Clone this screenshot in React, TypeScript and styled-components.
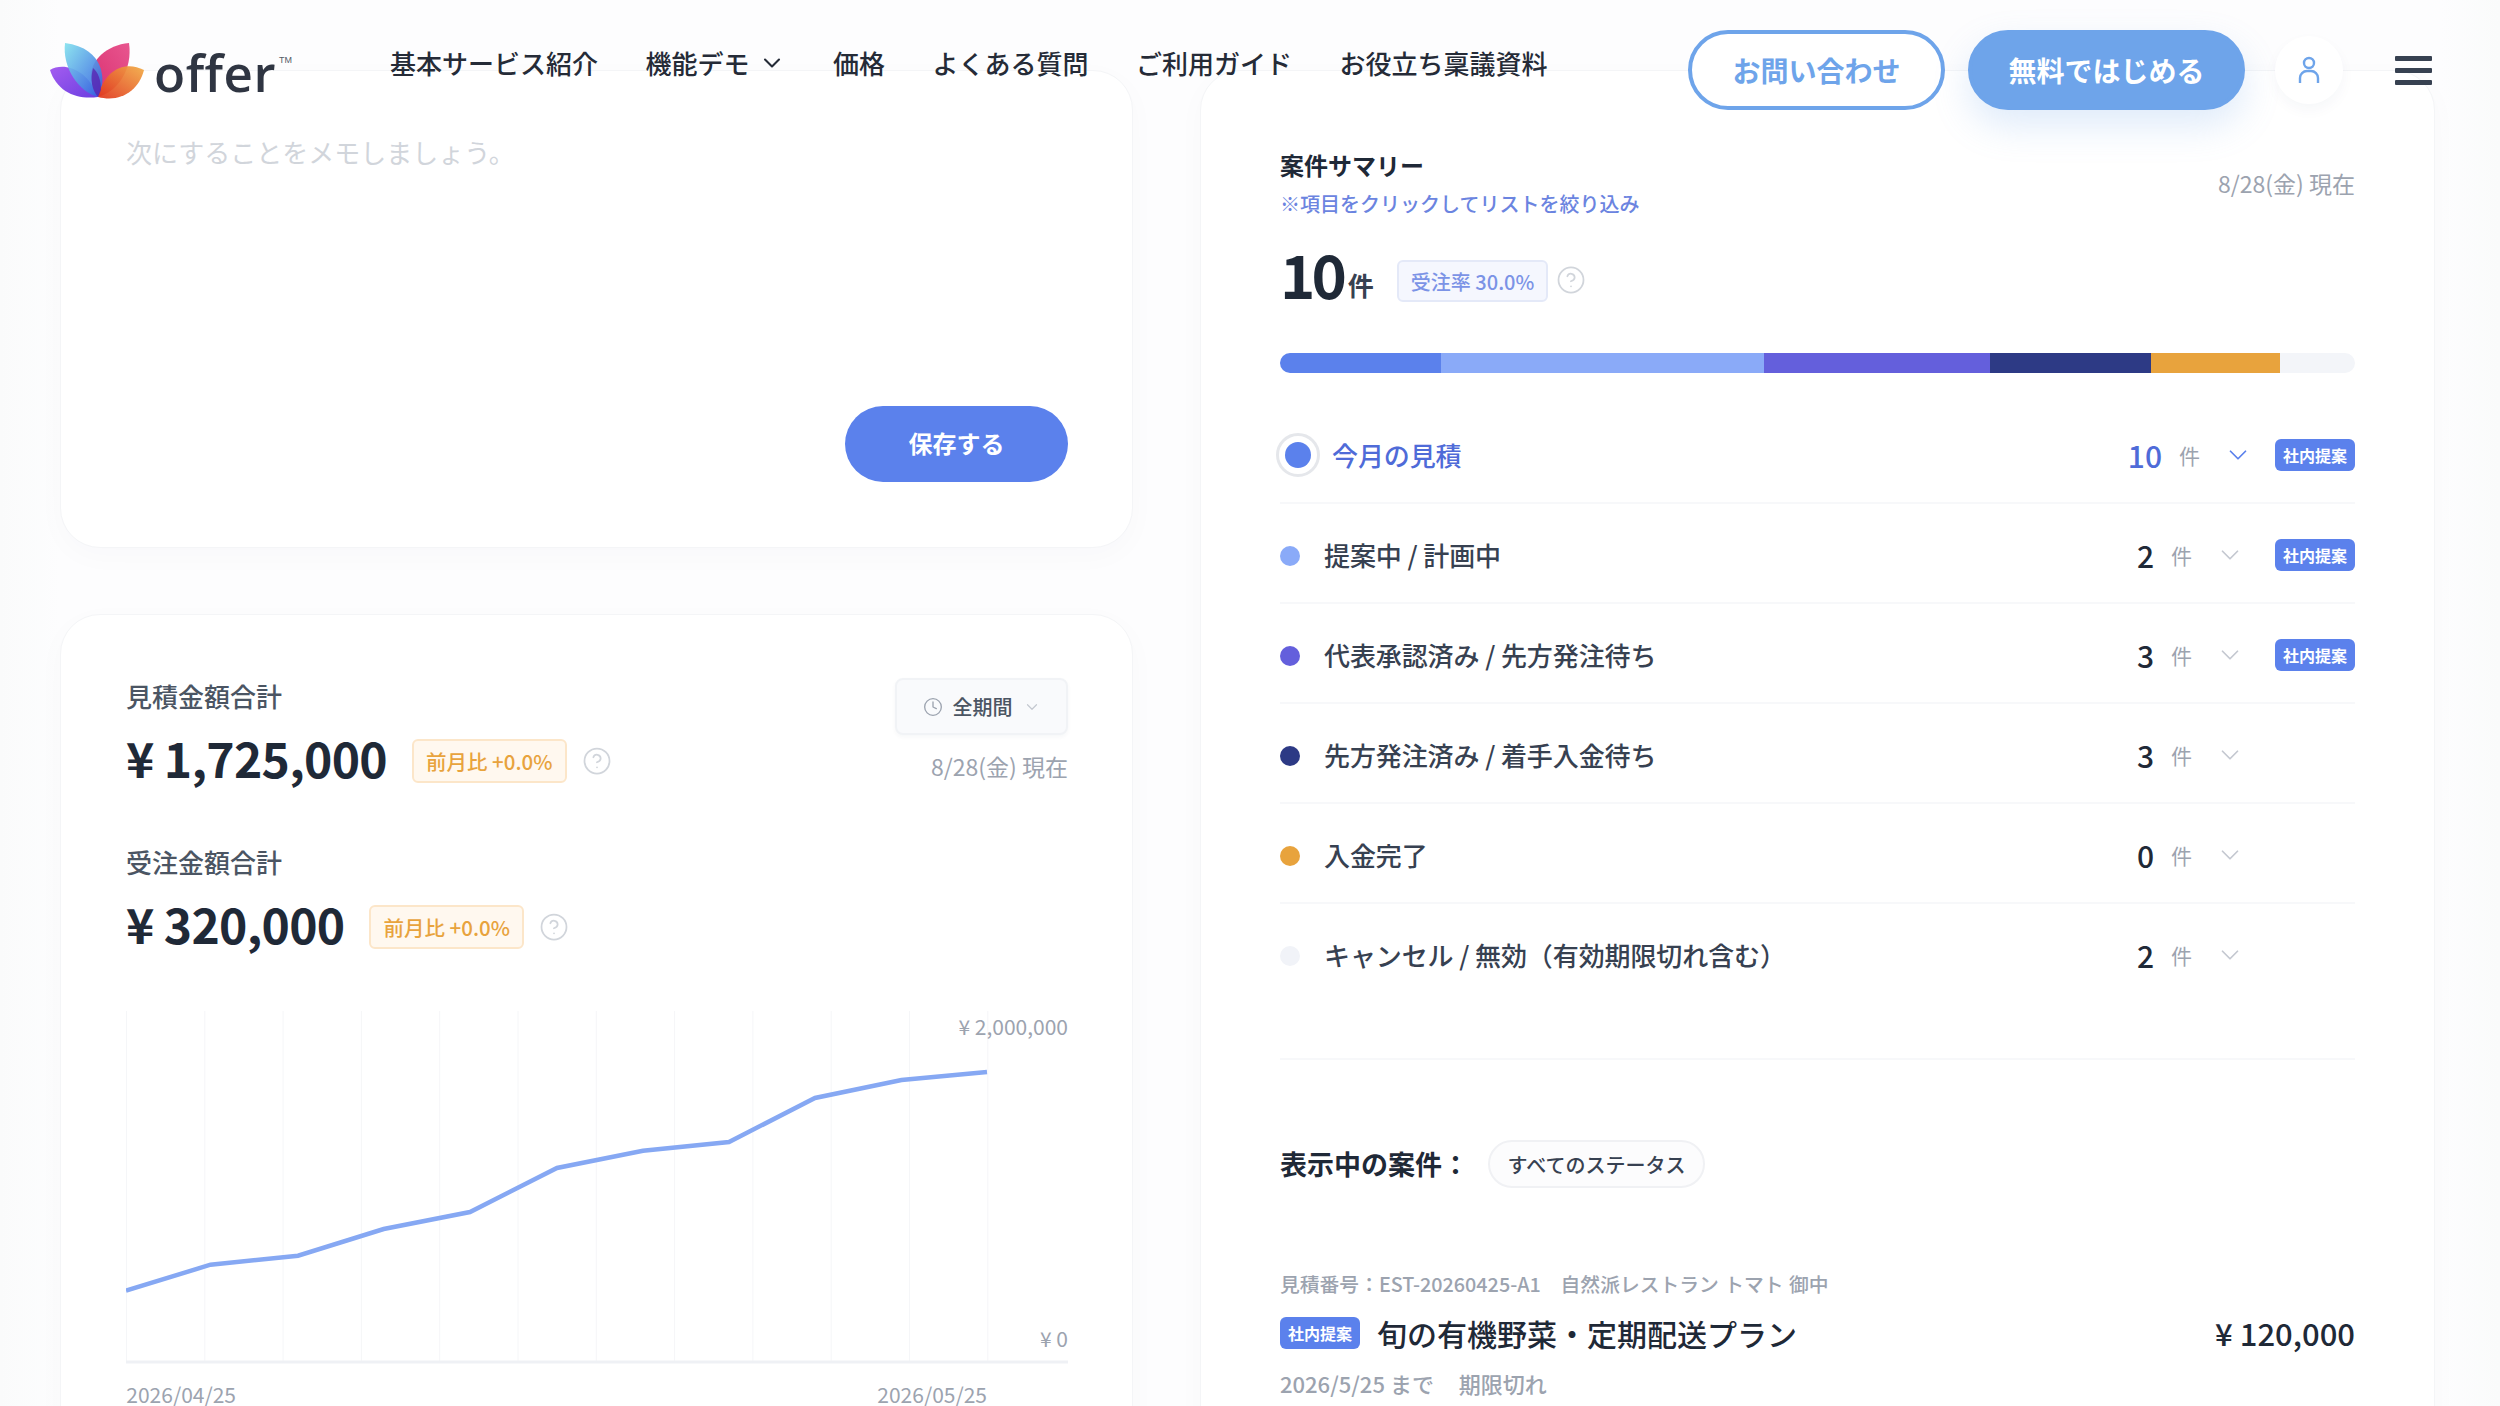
import React from "react";
import styled, { createGlobalStyle } from "styled-components";
import { ChevronDown, CircleHelp, Clock } from "lucide-react";

const GlobalStyle = createGlobalStyle`
  html, body {
    margin: 0;
    padding: 0;
    background: #fff;
  }
  body {
    font-family: "Noto Sans CJK JP", "Noto Sans", sans-serif;
    color: #1f2937;
  }
  * { box-sizing: border-box; }
`;

const Page = styled.div`
  position: relative;
  width: 2500px;
  height: 1406px;
  overflow: hidden;
  background: linear-gradient(90deg, #fafbfb 0, #fdfdfe 60px, #fdfdfe 2440px, #fafbfb 100%);
`;

// Header floats over the cards
const Header = styled.header`
  position: absolute;
  top: 0;
  left: 0;
  right: 0;
  height: 140px;
  display: flex;
  align-items: flex-start;
  padding: 30px 68px 0 48px;
  z-index: 10;
`;

const LogoWrap = styled.a`
  position: relative;
  display: flex;
  align-items: flex-start;
  width: 342px;
  height: 70px;
  padding-top: 10px;
  flex: none;
`;

const LogoText = styled.span`
  margin: 0 0 0 6px;
  font-family: "Open Sans", sans-serif;
  font-size: 51px;
  line-height: 64px;
  font-weight: 600;
  letter-spacing: 0.5px;
  color: #2f3542;
`;

const Tm = styled.span`
  position: absolute;
  left: 231px;
  top: 25px;
  font-family: "Liberation Sans", sans-serif;
  font-size: 9px;
  line-height: 10px;
  color: #555b66;
`;

const Nav = styled.nav`
  display: flex;
  gap: 47.5px;
  height: 66px;
  align-items: center;
`;

const NavItem = styled.a`
  display: flex;
  align-items: center;
  gap: 8px;
  font-size: 26px;
  line-height: 66px;
  font-weight: 500;
  color: #252b37;
  white-space: nowrap;
`;

const Actions = styled.div`
  margin-left: auto;
  display: flex;
  align-items: center;
`;

const PillButton = styled.button<{ $filled?: boolean }>`
  height: 80px;
  padding: 0;
  width: ${(p) => (p.$filled ? "277px" : "257px")};
  margin-left: ${(p) => (p.$filled ? "23px" : "0")};
  border-radius: 40px;
  border: 4px solid #6ea4ea;
  background: ${(p) => (p.$filled ? "#6ea4ea" : "#fff")};
  color: ${(p) => (p.$filled ? "#fff" : "#6ea4ea")};
  font-family: inherit;
  font-size: 28px;
  font-weight: 700;
  box-shadow: ${(p) => (p.$filled ? "0 16px 36px rgba(110, 164, 234, 0.22)" : "none")};
`;

const UserButton = styled.div`
  width: 68px;
  height: 68px;
  margin-left: 30px;
  border-radius: 50%;
  background: #fff;
  box-shadow: 0 6px 14px rgba(30, 50, 90, 0.04);
  display: flex;
  align-items: center;
  justify-content: center;
`;

const Burger = styled.div`
  width: 37px;
  margin-left: 52px;
  display: flex;
  flex-direction: column;
  gap: 7px;

  span {
    display: block;
    height: 5px;
    border-radius: 1px;
    background: #374151;
  }
`;

const Columns = styled.main`
  display: grid;
  grid-template-columns: 1073px 1235px;
  column-gap: 67px;
  padding: 70px 0 0 60px;
  align-items: start;
`;

const LeftColumn = styled.div`
  display: flex;
  flex-direction: column;
  gap: 66px;
`;

const Card = styled.section`
  background: #fff;
  border: 1px solid #f4f5f7;
  border-radius: 40px;
  box-shadow: 0 8px 30px rgba(30, 40, 70, 0.025);
`;

const MemoCard = styled(Card)`
  height: 478px;
  padding: 62px 64px 65px 65px;
  display: flex;
  flex-direction: column;
`;

const MemoHint = styled.div`
  font-size: 26px;
  line-height: 38px;
  color: #d1d5db;
  flex: 1;
`;

const SaveButton = styled.button`
  align-self: flex-end;
  width: 223px;
  height: 76px;
  padding: 0 0 3px;
  border: none;
  border-radius: 38px;
  background: #5b81ec;
  color: #fff;
  font-family: inherit;
  font-size: 24px;
  font-weight: 700;
`;

const TotalsCard = styled(Card)`
  padding: 62px 64px 0 65px;
  height: 900px;
`;

const TotalsTop = styled.div`
  display: flex;
  justify-content: space-between;
  align-items: flex-start;
  height: 166px;
`;

const TotalLabel = styled.div`
  font-size: 26px;
  line-height: 38px;
  font-weight: 500;
  color: #4b5563;
`;

const TotalRow = styled.div`
  display: flex;
  align-items: center;
  height: 72px;
  margin-top: 6px;
`;

const Amount = styled.div`
  font-size: 48px;
  line-height: 72px;
  font-weight: 700;
  letter-spacing: -0.7px;
  color: #1f2937;
  white-space: nowrap;
`;

const DeltaBadge = styled.span`
  margin: 7px 0 0 25px;
  height: 44px;
  padding: 0 12px;
  display: flex;
  align-items: center;
  border: 2px solid #fce6c9;
  border-radius: 6px;
  background: #fff8ef;
  color: #e8a33d;
  font-size: 20.5px;
  font-weight: 500;
  white-space: nowrap;
`;

const HelpIcon = styled(CircleHelp)<{ $gap: number; $drop?: number }>`
  margin: ${(p) => p.$drop ?? 0}px 0 0 ${(p) => p.$gap}px;
  color: #d1d5db;
  flex: none;
`;

const PeriodColumn = styled.div`
  display: flex;
  flex-direction: column;
  align-items: flex-end;
  margin-top: 1px;
`;

const PeriodSelect = styled.div`
  width: 173px;
  height: 57px;
  display: flex;
  align-items: center;
  justify-content: center;
  gap: 10px;
  background: #f9fafc;
  border: 2px solid #f1f3f6;
  border-radius: 8px;
  font-size: 20px;
  font-weight: 500;
  color: #4b5563;
  box-shadow: 0 2px 4px rgba(30, 40, 70, 0.04);
`;

const AsOf = styled.div`
  font-size: 23px;
  line-height: 32px;
  color: #9ca3af;
  white-space: nowrap;
`;

const PeriodAsOf = styled(AsOf)`
  margin-top: 15px;
`;

const Chart = styled.div`
  position: relative;
  width: 942px;
  height: 383px;
  margin-top: 52px;
`;

const ChartLabel = styled.span<{ $top: number; $right: number }>`
  position: absolute;
  top: ${(p) => p.$top}px;
  right: ${(p) => p.$right}px;
  font-size: 21px;
  line-height: 22px;
  color: #9ca3af;
  white-space: nowrap;
`;

const SummaryCard = styled(Card)`
  height: 1400px;
  padding: 76px 79px 0;
`;

const SummaryTop = styled.div`
  display: flex;
  justify-content: space-between;
  align-items: center;
`;

const SummaryTitle = styled.div`
  font-size: 24px;
  line-height: 36px;
  font-weight: 700;
  color: #1f2937;
`;

const SummaryNote = styled.div`
  margin-top: 6px;
  font-size: 20px;
  line-height: 30px;
  font-weight: 500;
  color: #6b84e0;
`;

const CountLine = styled.div`
  display: flex;
  align-items: center;
  height: 74px;
  margin-top: 17px;
`;

const BigCount = styled.span`
  font-size: 60px;
  line-height: 74px;
  font-weight: 700;
  letter-spacing: -4px;
  color: #1f2937;
`;

const BigUnit = styled.span`
  margin: 24px 0 0 5px;
  font-size: 26px;
  line-height: 38px;
  font-weight: 700;
  color: #374151;
`;

const RateBadge = styled.span`
  margin: 16px 0 0 23px;
  height: 42px;
  padding: 0 12px;
  display: flex;
  align-items: center;
  background: #f5f7fe;
  border: 2px solid #e4e9f8;
  border-radius: 6px;
  color: #7b93e6;
  font-size: 20px;
  font-weight: 500;
  white-space: nowrap;
`;

const StackBar = styled.div`
  display: flex;
  height: 20px;
  margin-top: 43px;
  border-radius: 10px;
  overflow: hidden;
`;

const StackPart = styled.div<{ $color: string; $width: number }>`
  width: ${(p) => p.$width}px;
  background: ${(p) => p.$color};
`;

const StatusList = styled.div`
  margin-top: 31px;
`;

const StatusRow = styled.div<{ $last?: boolean }>`
  display: flex;
  align-items: center;
  height: ${(p) => (p.$last ? "156px" : "100px")};
  padding-top: 4px;
  padding-bottom: ${(p) => (p.$last ? "56px" : "0")};
  border-bottom: 2px solid #f7f8fa;
`;

const Dot = styled.span<{ $color: string }>`
  width: 20px;
  height: 20px;
  margin-top: 2px;
  border-radius: 50%;
  background: ${(p) => p.$color};
  flex: none;
`;

const ActiveDot = styled.span`
  width: 44px;
  height: 44px;
  margin-left: -4px;
  border-radius: 50%;
  border: 3px solid #e5e7eb;
  display: flex;
  align-items: center;
  justify-content: center;
  flex: none;

  &::after {
    content: "";
    width: 26px;
    height: 26px;
    border-radius: 50%;
    background: #5b81ec;
  }
`;

const StatusName = styled.span<{ $active?: boolean }>`
  margin-left: ${(p) => (p.$active ? "12px" : "24px")};
  flex: 1;
  font-size: 26px;
  line-height: 38px;
  font-weight: 500;
  letter-spacing: -0.1px;
  color: ${(p) => (p.$active ? "#4f6bd8" : "#374151")};
  white-space: nowrap;
`;

const StatusCount = styled.span<{ $active?: boolean }>`
  font-size: 30px;
  line-height: 38px;
  font-weight: 500;
  color: ${(p) => (p.$active ? "#4f6bd8" : "#1f2937")};
`;

const StatusUnit = styled.span`
  margin-left: 17px;
  font-size: 21px;
  line-height: 32px;
  color: #9ca3af;
`;

const StatusChevron = styled(ChevronDown)<{ $active?: boolean }>`
  margin-left: 23px;
  color: ${(p) => (p.$active ? "#5b81ec" : "#c4c8d0")};
  flex: none;
`;

const BadgeSlot = styled.span<{ $active?: boolean }>`
  width: 80px;
  margin-left: ${(p) => (p.$active ? "22px" : "30px")};
  flex: none;
`;

const InternalBadge = styled.span`
  display: flex;
  align-items: center;
  justify-content: center;
  width: 80px;
  height: 32px;
  border-radius: 6px;
  background: #5b81ec;
  color: #fff;
  font-size: 16px;
  font-weight: 700;
  white-space: nowrap;
`;

const FilterLine = styled.div`
  display: flex;
  align-items: center;
  margin-top: 80px;
`;

const FilterLabel = styled.span`
  font-size: 27px;
  line-height: 48px;
  font-weight: 700;
  color: #1f2937;
  white-space: nowrap;
`;

const FilterPill = styled.span`
  margin-left: 19px;
  width: 217px;
  height: 48px;
  display: flex;
  align-items: center;
  justify-content: center;
  background: #fcfcfd;
  border: 2px solid #f0f1f4;
  border-radius: 24px;
  font-size: 20px;
  font-weight: 500;
  color: #374151;
`;

const DealMeta = styled.div`
  margin-top: 81px;
  font-size: 19.8px;
  line-height: 30px;
  font-weight: 500;
  word-spacing: 1px;
  color: #9ca3af;
  white-space: pre;
`;

const DealRow = styled.div`
  display: flex;
  align-items: center;
  height: 46px;
  margin-top: 11px;
`;

const DealTitle = styled.span`
  margin-left: 17px;
  flex: 1;
  font-size: 30px;
  line-height: 46px;
  font-weight: 500;
  color: #1f2937;
`;

const DealPrice = styled.span`
  font-size: 31px;
  line-height: 46px;
  font-weight: 500;
  color: #1f2937;
`;

const DealDate = styled.div`
  margin-top: 11px;
  font-size: 22px;
  line-height: 32px;
  font-weight: 500;
  color: #9ca3af;
  white-space: pre;
`;

const Logo = () => (
  <svg width="100" height="60" viewBox="47 40 100 60">
    <defs>
      <linearGradient id="teal" x1="0" y1="0" x2="1" y2="1">
        <stop offset="0" stopColor="#84e2ee" />
        <stop offset="1" stopColor="#2f5be0" />
      </linearGradient>
      <linearGradient id="pink" x1="1" y1="0" x2="0" y2="1">
        <stop offset="0" stopColor="#e8568f" />
        <stop offset="1" stopColor="#d92f6f" />
      </linearGradient>
      <linearGradient id="purple" x1="0" y1="0" x2="1" y2="1">
        <stop offset="0" stopColor="#a45cf0" />
        <stop offset="1" stopColor="#6c3fe0" />
      </linearGradient>
      <linearGradient id="orange" x1="1" y1="0" x2="0" y2="1">
        <stop offset="0" stopColor="#f2ac45" />
        <stop offset="1" stopColor="#e0351c" />
      </linearGradient>
    </defs>
    <path d="M49 70C62 62 86 68 97 97C76 100 56 92 49 70Z" fill="url(#purple)" />
    <path d="M128 43C106 45 89 60 90 78C91 86 93 92 97 97C116 92 132 70 128 43Z" fill="url(#pink)" />
    <path d="M64 43C61 68 78 92 97 97C106 82 104 48 64 43Z" fill="url(#teal)" opacity="0.92" />
    <path d="M143 70C124 60 103 70 97 97C120 103 138 90 143 70Z" fill="url(#orange)" opacity="0.93" />
    <path d="M97 97C91 90 89 80 92 68C97 72 100 80 100 90Z" fill="#5a1fb0" opacity="0.75" />
  </svg>
);

const UserIcon = () => (
  <svg width="24" height="28" viewBox="0 0 24 28" fill="none" stroke="#6ea4ea" strokeWidth="2.4">
    <circle cx="12" cy="7" r="5" />
    <path d="M3 27v-5a7 7 0 0 1 7-7h4a7 7 0 0 1 7 7v5" />
  </svg>
);

const gridX = Array.from({ length: 12 }, (_, i) => 0.5 + i * 78.3);
const linePoints = "0,279.7 84.5,253.7 172,244.7 257.7,218 344,201 431,157 517,139.7 603,131 689,87 775.5,69 861,61";

const SalesChart = () => (
  <Chart>
    <svg width="942" height="353" viewBox="0 0 942 353">
      {gridX.map((x) => (
        <line key={x} x1={x} x2={x} y1="0" y2="351" stroke="#f5f6f8" strokeWidth="1" />
      ))}
      <line x1="0" x2="942" y1="351" y2="351" stroke="#eff1f5" strokeWidth="3" />
      <polyline points={linePoints} fill="none" stroke="#86a8f3" strokeWidth="4.5" />
    </svg>
    <ChartLabel $top={4} $right={0}>¥ 2,000,000</ChartLabel>
    <ChartLabel $top={316} $right={0}>¥ 0</ChartLabel>
    <ChartLabel $top={372} $right={832}>2026/04/25</ChartLabel>
    <ChartLabel $top={372} $right={81}>2026/05/25</ChartLabel>
  </Chart>
);

const navItems = ["基本サービス紹介", "機能デモ", "価格", "よくある質問", "ご利用ガイド", "お役立ち稟議資料"];

const stackParts = [
  { color: "#5b81ec", width: 161 },
  { color: "#8aaaf8", width: 323 },
  { color: "#645fdc", width: 226 },
  { color: "#2d3a85", width: 161 },
  { color: "#e8a33d", width: 129 },
  { color: "#f3f5f9", width: 75 },
];

const statuses = [
  { name: "今月の見積", count: 10, color: "#5b81ec", badge: true, active: true },
  { name: "提案中 / 計画中", count: 2, color: "#8aaaf8", badge: true },
  { name: "代表承認済み / 先方発注待ち", count: 3, color: "#645fdc", badge: true },
  { name: "先方発注済み / 着手入金待ち", count: 3, color: "#2d3a85" },
  { name: "入金完了", count: 0, color: "#e8a33d" },
  { name: "キャンセル / 無効（有効期限切れ含む）", count: 2, color: "#f1f3f8", last: true },
];

export default function App() {
  return (
    <Page>
      <GlobalStyle />
      <Header>
        <LogoWrap>
          <Logo />
          <LogoText>offer</LogoText>
          <Tm>TM</Tm>
        </LogoWrap>
        <Nav>
          {navItems.map((item) => (
            <NavItem key={item}>
              {item}
              {item === "機能デモ" && <ChevronDown size={28} strokeWidth={1.8} />}
            </NavItem>
          ))}
        </Nav>
        <Actions>
          <PillButton>お問い合わせ</PillButton>
          <PillButton $filled>無料ではじめる</PillButton>
          <UserButton>
            <UserIcon />
          </UserButton>
          <Burger>
            <span />
            <span />
            <span />
          </Burger>
        </Actions>
      </Header>

      <Columns>
        <LeftColumn>
          <MemoCard>
            <MemoHint>次にすることをメモしましょう。</MemoHint>
            <SaveButton>保存する</SaveButton>
          </MemoCard>

          <TotalsCard>
            <TotalsTop>
              <div>
                <TotalLabel>見積金額合計</TotalLabel>
                <TotalRow>
                  <Amount>¥ 1,725,000</Amount>
                  <DeltaBadge>前月比 +0.0%</DeltaBadge>
                  <HelpIcon $gap={15} $drop={7} size={30} strokeWidth={1.4} />
                </TotalRow>
              </div>
              <PeriodColumn>
                <PeriodSelect>
                  <Clock size={20} strokeWidth={1.6} color="#9ca3af" />
                  全期間
                  <ChevronDown size={18} strokeWidth={1.6} color="#c4c8d0" />
                </PeriodSelect>
                <PeriodAsOf>8/28(金) 現在</PeriodAsOf>
              </PeriodColumn>
            </TotalsTop>
            <div>
              <TotalLabel>受注金額合計</TotalLabel>
              <TotalRow>
                <Amount>¥ 320,000</Amount>
                <DeltaBadge>前月比 +0.0%</DeltaBadge>
                <HelpIcon $gap={15} $drop={7} size={30} strokeWidth={1.4} />
              </TotalRow>
            </div>
            <SalesChart />
          </TotalsCard>
        </LeftColumn>

        <SummaryCard>
          <SummaryTop>
            <div>
              <SummaryTitle>案件サマリー</SummaryTitle>
              <SummaryNote>※項目をクリックしてリストを絞り込み</SummaryNote>
            </div>
            <AsOf>8/28(金) 現在</AsOf>
          </SummaryTop>
          <CountLine>
            <BigCount>10</BigCount>
            <BigUnit>件</BigUnit>
            <RateBadge>受注率 30.0%</RateBadge>
            <HelpIcon $gap={8} $drop={14} size={30} strokeWidth={1.4} />
          </CountLine>
          <StackBar>
            {stackParts.map((part) => (
              <StackPart key={part.color} $color={part.color} $width={part.width} />
            ))}
          </StackBar>
          <StatusList>
            {statuses.map((s) => (
              <StatusRow key={s.name} $last={s.last}>
                {s.active ? <ActiveDot /> : <Dot $color={s.color} />}
                <StatusName $active={s.active}>{s.name}</StatusName>
                <StatusCount $active={s.active}>{s.count}</StatusCount>
                <StatusUnit>件</StatusUnit>
                <StatusChevron $active={s.active} size={30} strokeWidth={1.4} />
                <BadgeSlot $active={s.active}>{s.badge && <InternalBadge>社内提案</InternalBadge>}</BadgeSlot>
              </StatusRow>
            ))}
          </StatusList>
          <FilterLine>
            <FilterLabel>表示中の案件：</FilterLabel>
            <FilterPill>すべてのステータス</FilterPill>
          </FilterLine>
          <DealMeta>見積番号：EST-20260425-A1　自然派レストラン トマト 御中</DealMeta>
          <DealRow>
            <InternalBadge>社内提案</InternalBadge>
            <DealTitle>旬の有機野菜・定期配送プラン</DealTitle>
            <DealPrice>¥ 120,000</DealPrice>
          </DealRow>
          <DealDate>2026/5/25 まで     期限切れ</DealDate>
        </SummaryCard>
      </Columns>
    </Page>
  );
}
